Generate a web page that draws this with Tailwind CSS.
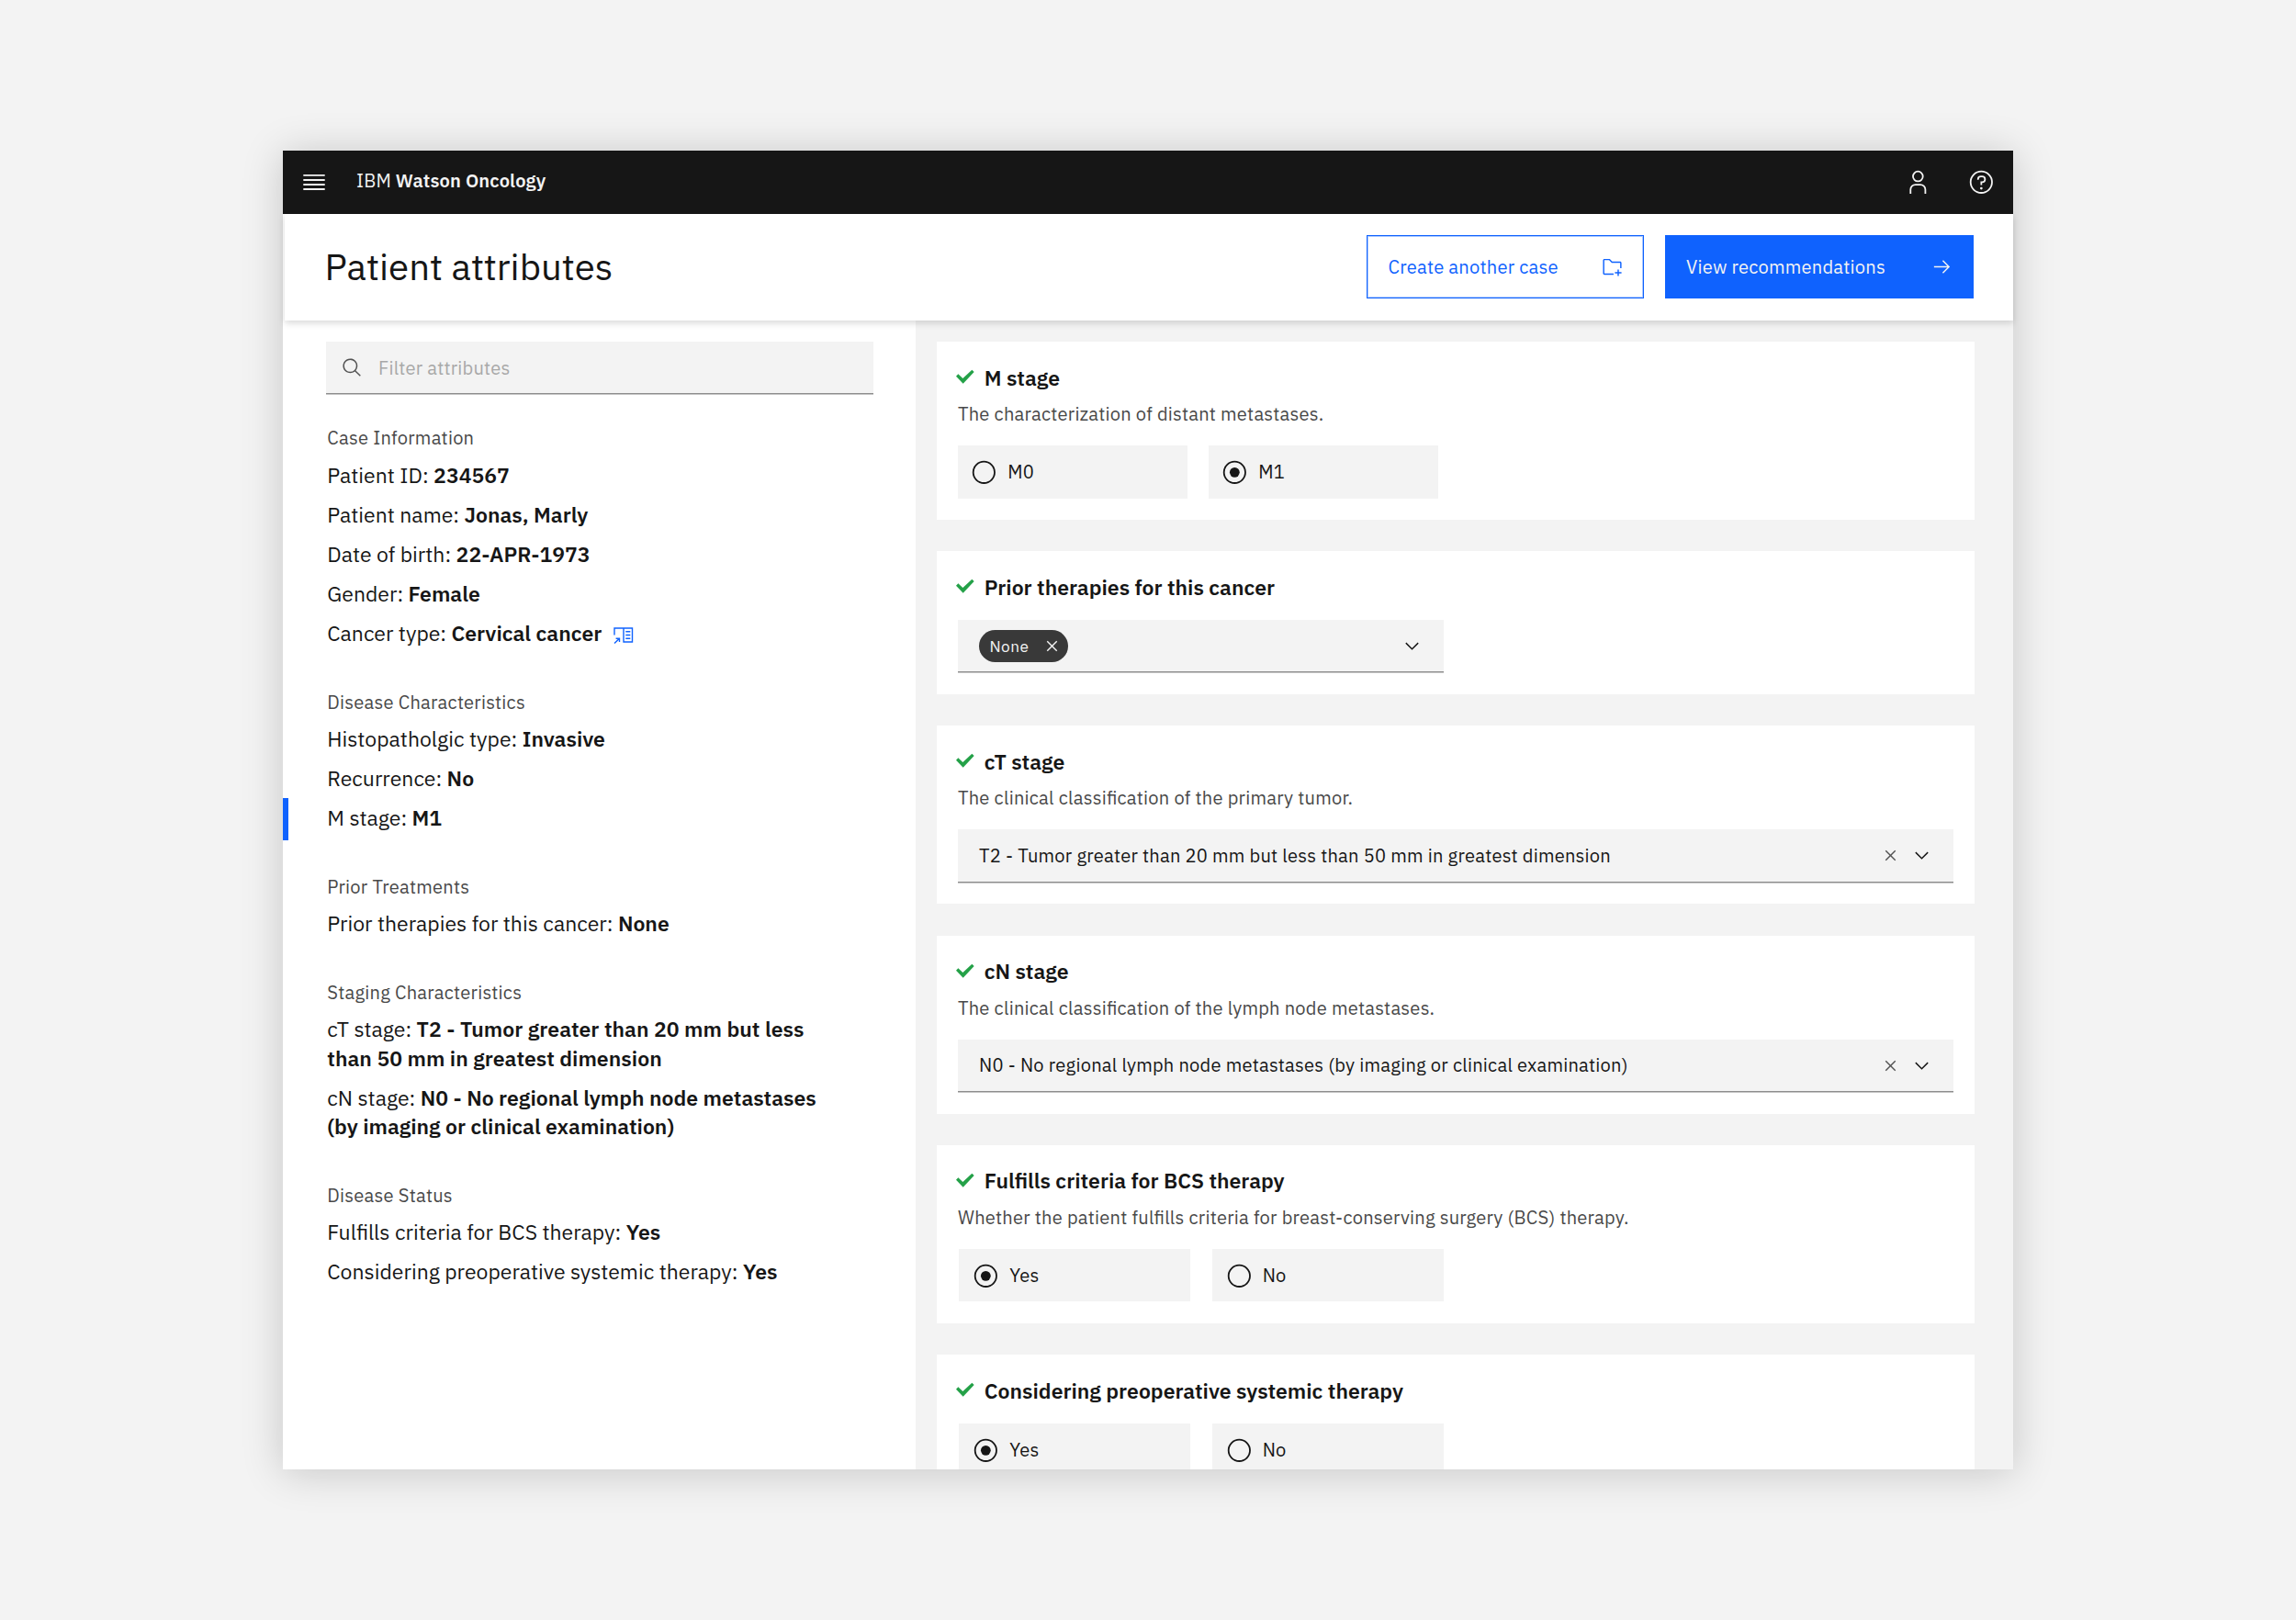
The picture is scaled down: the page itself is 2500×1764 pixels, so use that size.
<!DOCTYPE html>
<html lang="en">
<head>
    <meta charset="UTF-8">
    <meta name="viewport" content="width=device-width, initial-scale=1.0">
    <title>IBM Watson Oncology - Patient attributes</title>
    <script src="https://cdn.jsdelivr.net/npm/@tailwindcss/browser@4"></script>
</head>
<body class="bg-[#f3f3f3] text-[#161616] font-['IBM_Plex_Sans','Roboto',sans-serif] [font-feature-settings:'liga'] h-[1764px] pt-[163.5px] pl-[307.5px] overflow-hidden">
    <!-- Shared icons -->
    <svg class="hidden">
        <symbol id="check" viewBox="0 0 60 48"><path fill="currentColor" d="M0 23l7-7 15 14L52 2l7 7-36 38z"/></symbol>
        <symbol id="close" viewBox="0 0 32 32"><path fill="currentColor" d="M24 9.4 22.6 8 16 14.6 9.4 8 8 9.4l6.6 6.6L8 22.6 9.4 24l6.6-6.6 6.6 6.6 1.4-1.4-6.6-6.6L24 9.4z"/></symbol>
        <symbol id="chevron" viewBox="0 0 32 32"><path fill="currentColor" d="M16 22 6 12l1.4-1.4 8.6 8.6 8.6-8.6L26 12z"/></symbol>
        <symbol id="radio" viewBox="0 0 32 32"><circle cx="16" cy="16" r="13" fill="none" stroke="currentColor" stroke-width="2"/></symbol>
        <symbol id="radio-on" viewBox="0 0 32 32"><circle cx="16" cy="16" r="13" fill="none" stroke="currentColor" stroke-width="2"/><circle cx="16" cy="16" r="6" fill="currentColor"/></symbol>
    </svg>

    <div class="w-[1884.5px] h-[1436.5px] bg-white flex flex-col shadow-[0_3px_42px_rgba(0,0,0,0.19)]">
        <!-- Top bar -->
        <header class="h-[69px] shrink-0 bg-[#161616] text-[#f3f3f3] flex items-center pl-[22.5px] pr-[20px]">
            <svg class="w-[24px] h-[18px]" viewBox="0 0 24 18" fill="currentColor"><path d="M0.3 0.9h23.4v1.9H0.3zM0.3 6h23.4v1.9H0.3zM0.3 11h23.4v1.9H0.3zM0.3 16h23.4v1.9H0.3z"/></svg>
            <div class="ml-[34px] -mt-[2px] text-[20.1px] tracking-[0.14px] whitespace-nowrap">IBM <span class="font-semibold">Watson Oncology</span></div>
            <svg class="ml-auto size-[28.7px]" viewBox="0 0 32 32" fill="currentColor"><path d="M16 4a5 5 0 1 1-5 5 5 5 0 0 1 5-5m0-2a7 7 0 1 0 7 7 7 7 0 0 0-7-7zM26 30h-2v-5a5 5 0 0 0-5-5h-6a5 5 0 0 0-5 5v5H6v-5a7 7 0 0 1 7-7h6a7 7 0 0 1 7 7z"/></svg>
            <svg class="ml-[40.3px] size-[28.7px]" viewBox="0 0 32 32" fill="currentColor"><path d="M16 2a14 14 0 1 0 14 14A14 14 0 0 0 16 2zm0 26a12 12 0 1 1 12-12 12 12 0 0 1-12 12z"/><circle cx="16" cy="23.5" r="1.5"/><path d="M17 8h-1.5a4.49 4.49 0 0 0-4.5 4.5v.5h2v-.5a2.5 2.5 0 0 1 2.5-2.5H17a2.5 2.5 0 0 1 0 5h-2v4.5h2V17a4.5 4.5 0 0 0 0-9z"/></svg>
        </header>

        <!-- Page title and actions -->
        <div class="relative z-10 h-[116.6px] shrink-0 bg-white flex items-center ml-[2.5px] pl-[43.5px] pr-[43px] shadow-[0_3px_7px_rgba(0,0,0,0.15)]">
            <h1 class="-mt-[2px] text-[40.2px] whitespace-nowrap">Patient attributes</h1>
            <button class="ml-auto w-[302px] h-[69px] border border-[#0f62fe] shadow-[inset_0_0_0_1px_rgba(15,98,254,0.35)] text-[#0f62fe] text-[20.1px] flex items-center justify-between pl-[22.5px] pr-[22px]">
                <span class="tracking-[0.23px] whitespace-nowrap">Create another case</span>
                <svg class="size-[23px]" viewBox="0 0 32 32" fill="currentColor"><path d="M26 20h-2v4h-4v2h4v4h2v-4h4v-2h-4z"/><path d="M28 8H16l-3.4-3.4c-.4-.4-.9-.6-1.4-.6H4c-1.1 0-2 .9-2 2v20c0 1.1.9 2 2 2h14v-2H4V6h7.2l3.4 3.4.6.6H28v8h2v-8c0-1.1-.9-2-2-2z"/></svg>
            </button>
            <button class="ml-[23px] w-[336px] h-[69px] bg-[#0f62fe] text-[#f3f3f3] text-[20.1px] flex items-center justify-between pl-[23px] pr-[23px]">
                <span class="tracking-[0.23px] whitespace-nowrap">View recommendations</span>
                <svg class="size-[23px]" viewBox="0 0 32 32" fill="currentColor"><path d="M18 6l-1.43 1.393L24.15 15H4v2h20.15l-7.58 7.573L18 26l10-10z"/></svg>
            </button>
        </div>

        <div class="flex-1 min-h-0 flex">
            <!-- Attribute summary -->
            <aside class="w-[689.5px] shrink-0 pl-[47.5px] pt-[23px]">
                <div class="w-[596px] h-[57px] bg-[#f3f3f3] border-b border-[#8d8d8d] shadow-[0_1px_0_#c6c6c6] flex items-center pl-[17px] pt-px">
                    <svg class="size-[23px] text-[#525252]" viewBox="0 0 32 32" fill="currentColor"><path d="M29 27.586l-7.552-7.552a11.018 11.018 0 1 0-1.414 1.414L27.586 29zM4 13a9 9 0 1 1 9 9 9.01 9.01 0 0 1-9-9z"/></svg>
                    <span class="ml-[17px] text-[20.1px] text-[#a8a8a8] tracking-[0.23px]">Filter attributes</span>
                </div>

                <div class="ml-[1.3px] mt-[36.4px] flex flex-col gap-[47px] text-[23px] leading-[31.5px] whitespace-nowrap">
                    <section>
                        <h2 class="text-[20.1px] leading-[24px] text-[#494949] tracking-[0.23px] mb-[12.6px]">Case Information</h2>
                        <div class="flex flex-col gap-[11.5px]">
                            <p>Patient ID: <b class="font-semibold">234567</b></p>
                            <p>Patient name: <b class="font-semibold">Jonas, Marly</b></p>
                            <p>Date of birth: <b class="font-semibold">22-APR-1973</b></p>
                            <p>Gender: <b class="font-semibold">Female</b></p>
                            <p class="flex items-center"><span class="whitespace-pre">Cancer type: </span><b class="font-semibold">Cervical cancer</b>
                                <svg class="ml-[12px] mt-[6px] size-[23px] text-[#0f62fe]" viewBox="0 0 23 23" fill="none" stroke="currentColor" stroke-width="1.4"><path d="M2 10.5V3h19.5v15H12V3M14.3 6.8h5M14.3 10.5h5M14.3 14.2h5M2 19.6l5.2-5.2M3.6 14.2h3.9v3.9"/></svg>
                            </p>
                        </div>
                    </section>
                    <section>
                        <h2 class="text-[20.1px] leading-[24px] text-[#494949] tracking-[0.23px] mb-[12.6px]">Disease Characteristics</h2>
                        <div class="flex flex-col gap-[11.5px]">
                            <p>Histopatholgic type: <b class="font-semibold">Invasive</b></p>
                            <p>Recurrence: <b class="font-semibold">No</b></p>
                            <p class="relative"><span class="absolute -left-[48.8px] -top-[6.6px] w-[6px] h-[46px] bg-[#0f62fe]"></span>M stage: <b class="font-semibold">M1</b></p>
                        </div>
                    </section>
                    <section>
                        <h2 class="text-[20.1px] leading-[24px] text-[#494949] tracking-[0.23px] mb-[12.6px]">Prior Treatments</h2>
                        <p>Prior therapies for this cancer: <b class="font-semibold">None</b></p>
                    </section>
                    <section>
                        <h2 class="text-[20.1px] leading-[24px] text-[#494949] tracking-[0.23px] mb-[12.6px]">Staging Characteristics</h2>
                        <div class="flex flex-col gap-[11.5px]">
                            <p>cT stage: <b class="font-semibold tracking-[0.03px]">T2 - Tumor greater than 20 mm but less<br>than 50 mm in greatest dimension</b></p>
                            <p>cN stage: <b class="font-semibold">N0 - No regional lymph node metastases<br>(by imaging or clinical examination)</b></p>
                        </div>
                    </section>
                    <section>
                        <h2 class="text-[20.1px] leading-[24px] text-[#494949] tracking-[0.23px] mb-[12.6px]">Disease Status</h2>
                        <div class="flex flex-col gap-[11.5px]">
                            <p>Fulfills criteria for BCS therapy: <b class="font-semibold">Yes</b></p>
                            <p>Considering preoperative systemic therapy: <b class="font-semibold">Yes</b></p>
                        </div>
                    </section>
                </div>
            </aside>

            <!-- Attribute forms -->
            <main class="flex-1 min-w-0 bg-[#f3f3f3] pt-[23px] pl-[23px] pr-[42.5px] overflow-hidden flex flex-col gap-[34.4px] text-[20.1px] whitespace-nowrap">
                <section class="shrink-0 bg-white pt-[22.5px] pb-[23.5px] px-[23px]">
                    <h3 class="flex items-center text-[23px] leading-[32px] font-semibold"><svg class="w-[20px] h-[16px] -ml-[2px] mr-[10.8px] -mt-px text-[#24a148]"><use href="#check"/></svg>M stage</h3>
                    <p class="mt-[12.5px] leading-[24px] text-[#494949] tracking-[0.23px]">The characterization of distant metastases.</p>
                    <div class="mt-[22px] flex gap-[23px] tracking-[0.23px]">
                        <div class="w-[250px] h-[57.5px] bg-[#f3f3f3] flex items-center pl-[14px] pt-px"><svg class="size-[28.7px] mr-[11.5px]"><use href="#radio"/></svg>M0</div>
                        <div class="w-[250px] h-[57.5px] bg-[#f3f3f3] flex items-center pl-[14px] pt-px"><svg class="size-[28.7px] mr-[11.5px]"><use href="#radio-on"/></svg>M1</div>
                    </div>
                </section>

                <section class="shrink-0 bg-white pt-[22.5px] pb-[23.3px] px-[23px]">
                    <h3 class="flex items-center text-[23px] leading-[32px] font-semibold"><svg class="w-[20px] h-[16px] -ml-[2px] mr-[10.8px] -mt-px text-[#24a148]"><use href="#check"/></svg>Prior therapies for this cancer</h3>
                    <div class="mt-[20px] w-[529px] h-[57.5px] bg-[#f3f3f3] border-b border-[#8d8d8d] shadow-[0_1px_0_#c6c6c6] flex items-center px-[23px] pt-px">
                        <span class="h-[35px] rounded-full bg-[#393939] text-[#f3f3f3] text-[17.2px] flex items-center pl-[11.5px] pr-[6px]"><span class="tracking-[0.46px]">None</span><svg class="ml-[13.5px] size-[23px]"><use href="#close"/></svg></span>
                        <svg class="ml-auto size-[23px]"><use href="#chevron"/></svg>
                    </div>
                </section>

                <section class="shrink-0 bg-white pt-[22.5px] pb-[23.5px] px-[23px]">
                    <h3 class="flex items-center text-[23px] leading-[32px] font-semibold"><svg class="w-[20px] h-[16px] -ml-[2px] mr-[10.8px] -mt-px text-[#24a148]"><use href="#check"/></svg>cT stage</h3>
                    <p class="mt-[12.5px] leading-[24px] text-[#494949] tracking-[0.23px]">The clinical classification of the primary tumor.</p>
                    <div class="mt-[22px] h-[57.5px] bg-[#f3f3f3] border-b border-[#8d8d8d] shadow-[0_1px_0_#c6c6c6] flex items-center px-[23px] pt-px">
                        <span class="tracking-[0.23px]">T2 - Tumor greater than 20 mm but less than 50 mm in greatest dimension</span>
                        <svg class="ml-auto size-[23px] text-[#525252]"><use href="#close"/></svg>
                        <svg class="ml-[11px] size-[23px]"><use href="#chevron"/></svg>
                    </div>
                </section>

                <section class="shrink-0 bg-white pt-[22.5px] pb-[23.5px] px-[23px]">
                    <h3 class="flex items-center text-[23px] leading-[32px] font-semibold"><svg class="w-[20px] h-[16px] -ml-[2px] mr-[10.8px] -mt-px text-[#24a148]"><use href="#check"/></svg>cN stage</h3>
                    <p class="mt-[12.5px] leading-[24px] text-[#494949] tracking-[0.23px]">The clinical classification of the lymph node metastases.</p>
                    <div class="mt-[22px] h-[57.5px] bg-[#f3f3f3] border-b border-[#8d8d8d] shadow-[0_1px_0_#c6c6c6] flex items-center px-[23px] pt-px">
                        <span class="tracking-[0.23px]">N0 - No regional lymph node metastases (by imaging or clinical examination)</span>
                        <svg class="ml-auto size-[23px] text-[#525252]"><use href="#close"/></svg>
                        <svg class="ml-[11px] size-[23px]"><use href="#chevron"/></svg>
                    </div>
                </section>

                <section class="shrink-0 bg-white pt-[22.5px] pb-[23.5px] px-[23px]">
                    <h3 class="flex items-center text-[23px] leading-[32px] font-semibold"><svg class="w-[20px] h-[16px] -ml-[2px] mr-[10.8px] -mt-px text-[#24a148]"><use href="#check"/></svg>Fulfills criteria for BCS therapy</h3>
                    <p class="mt-[12.5px] leading-[24px] text-[#494949] tracking-[0.23px]">Whether the patient fulfills criteria for breast-conserving surgery (BCS) therapy.</p>
                    <div class="mt-[22px] ml-px flex gap-[24px] tracking-[0.23px]">
                        <div class="w-[252px] h-[57.5px] bg-[#f3f3f3] flex items-center pl-[14.5px] pt-px"><svg class="size-[28.7px] mr-[12px]"><use href="#radio-on"/></svg>Yes</div>
                        <div class="w-[252px] h-[57.5px] bg-[#f3f3f3] flex items-center pl-[14.5px] pt-px"><svg class="size-[28.7px] mr-[11.5px]"><use href="#radio"/></svg>No</div>
                    </div>
                </section>

                <section class="shrink-0 bg-white pt-[22.5px] pb-[23.5px] px-[23px]">
                    <h3 class="flex items-center text-[23px] leading-[32px] font-semibold"><svg class="w-[20px] h-[16px] -ml-[2px] mr-[10.8px] -mt-px text-[#24a148]"><use href="#check"/></svg>Considering preoperative systemic therapy</h3>
                    <div class="mt-[20px] ml-px flex gap-[24px] tracking-[0.23px]">
                        <div class="w-[252px] h-[57.5px] bg-[#f3f3f3] flex items-center pl-[14.5px] pt-px"><svg class="size-[28.7px] mr-[12px]"><use href="#radio-on"/></svg>Yes</div>
                        <div class="w-[252px] h-[57.5px] bg-[#f3f3f3] flex items-center pl-[14.5px] pt-px"><svg class="size-[28.7px] mr-[11.5px]"><use href="#radio"/></svg>No</div>
                    </div>
                </section>
            </main>
        </div>
    </div>
</body>
</html>
